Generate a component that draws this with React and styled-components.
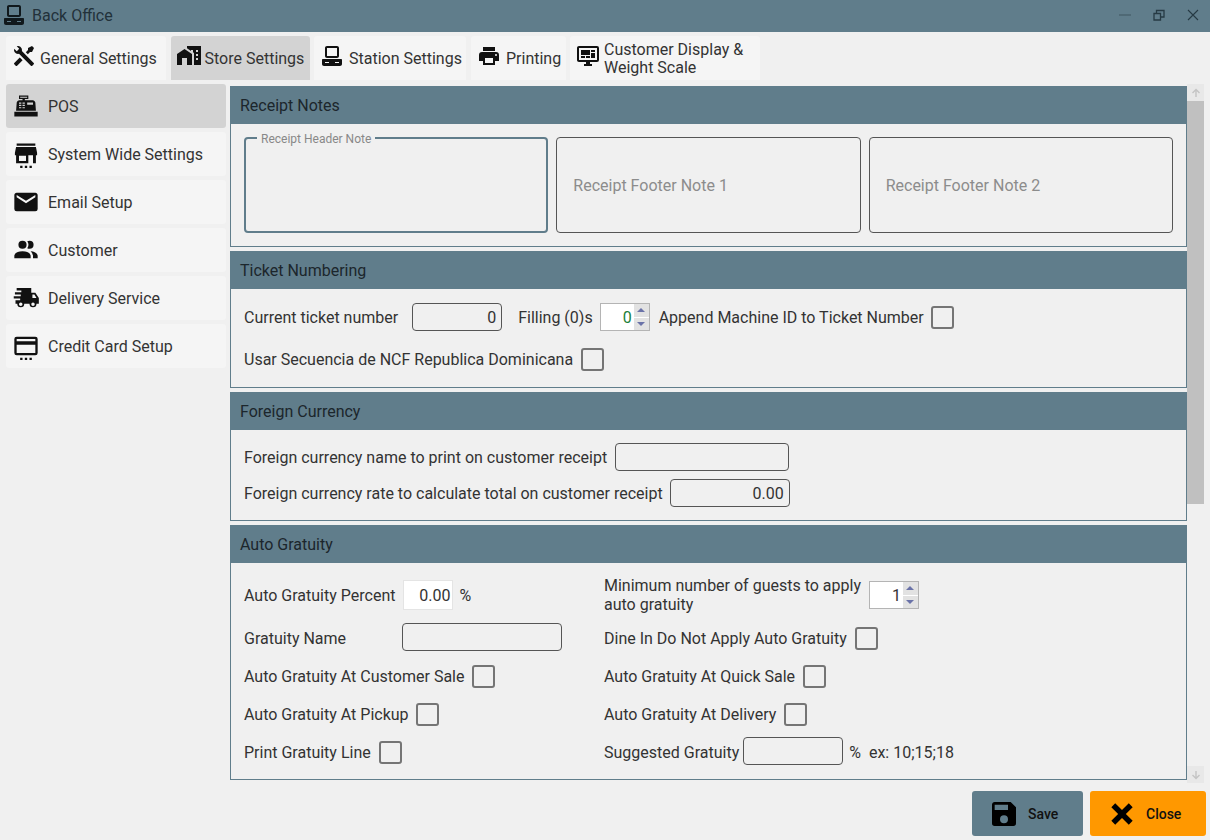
import React from 'react';
import styled, { createGlobalStyle } from 'styled-components';

const GlobalStyle = createGlobalStyle`
html, body {
  margin: 0;
  padding: 0;
  background: #f0f0f0;
}
* {
  box-sizing: border-box;
}
`

const paths = {
  tools: 'M21.71 20.29L20.29 21.71A1 1 0 0 1 18.88 21.71L7 9.85A3.81 3.81 0 0 1 6 10A4 4 0 0 1 2.22 4.7L4.76 7.24L5.29 6.71L6.71 5.29L7.24 4.76L4.7 2.22A4 4 0 0 1 10 6A3.81 3.81 0 0 1 9.85 7L21.71 18.88A1 1 0 0 1 21.71 20.29M2.29 18.88A1 1 0 0 0 2.29 20.29L3.71 21.71A1 1 0 0 0 5.12 21.71L10.59 16.25L7.76 13.42M20 2L16 4V6L13.83 8.17L15.83 10.17L18 8H20L22 4Z',
  homeCity: 'M0,21V10L7.5,5L15,10V21H10V14H5V21H0M24,2V21H17V8.93L16,8.27V6H14V6.93L10,4.27V2H24M21,14H19V16H21V14M21,10H19V12H21V10M21,6H19V8H21V6Z',
  desktop: 'M7,2C5.89,2 5,2.89 5,4V12C5,13.11 5.89,14 7,14H17C18.11,14 19,13.11 19,12V4C19,2.89 18.11,2 17,2H7M7,4H17V12H7V4M3,15C2.45,15 2,15.45 2,16V20C2,21.11 2.89,22 4,22H20C21.11,22 22,21.11 22,20V16C22,15.45 21.55,15 21,15H3M5,18H9V19H5V18M15,18H19V19H15V18Z',
  printer: 'M18,3H6V7H18M19,12A1,1 0 0,1 18,11A1,1 0 0,1 19,10A1,1 0 0,1 20,11A1,1 0 0,1 19,12M16,19H8V14H16M19,8H5A3,3 0 0,0 2,11V17H6V21H18V17H22V11A3,3 0 0,0 19,8Z',
  monitor: 'M21,16V4H3V16H21M21,2A2,2 0 0,1 23,4V16A2,2 0 0,1 21,18H14V20H16V22H8V20H10V18H3C1.89,18 1,17.1 1,16V4C1,2.89 1.89,2 3,2H21M5,6H14V11H5V6M15,6H19V8H15V6M19,9V14H15V9H19M5,12H9V14H5V12M10,12H14V14H10V12Z',
  register: 'M2,17H22V21H2V17M6.25,7H9V6H6V3H14V6H11V7H17.8C18.8,7 19.8,8 20,9L20.5,16H3.5L4.05,9C4.25,8 5.25,7 6.25,7M13,9V11H18V9H13M6,9V10H8V9H6M9,9V10H11V9H9M6,11V12H8V11H6M9,11V12H11V11H9M6,13V14H8V13H6M9,13V14H11V13H9M7,4V5H13V4H7Z',
  store: 'M4 3H20V5H4V3M20.5 6L21.5 11V13H20.5V20H18V13H14V20H3.5V13H2.5V11L3.5 6H20.5M12 13.5H6V18H12V13.5M7 24H9V22H7V24M11 24H13V22H11V24M15 24H17V22H15V24Z',
  email: 'M20,8L12,13L4,8V6L12,11L20,6M20,4H4C2.89,4 2,4.89 2,6V18A2,2 0 0,0 4,20H20A2,2 0 0,0 22,18V6C22,4.89 21.1,4 20,4Z',
  people: 'M16 17V19H2V17S2 13 9 13 16 17 16 17M12.5 7.5A3.5 3.5 0 1 0 9 11A3.5 3.5 0 0 0 12.5 7.5M15.94 13A5.32 5.32 0 0 1 18 17V19H22V17S22 13.37 15.94 13M15 4A3.39 3.39 0 0 0 13.07 4.59A5 5 0 0 1 13.07 10.41A3.39 3.39 0 0 0 15 11A3.5 3.5 0 0 0 15 4Z',
  truck: 'M4 3.5H16.5V7.5H20L23 12V17H21A3 3 0 0 1 15 17H10.5A3 3 0 0 1 4.5 17H3V14H7V12.5H1.5V10.5H7.5V9H2.5V7H8V5.5H4ZM7.5 15.8A1.5 1.5 0 1 0 7.5 18.8A1.5 1.5 0 1 0 7.5 15.8M18 15.8A1.5 1.5 0 1 0 18 18.8A1.5 1.5 0 1 0 18 15.8M17.5 9V12H21L19.2 9Z',
  card: 'M4 4H20A2 2 0 0 1 22 6V18A2 2 0 0 1 20 20H4A2 2 0 0 1 2 18V6A2 2 0 0 1 4 4ZM4 6V8H20V6H4M4 11V18H20V11H4M7 24H9V22H7V24M11 24H13V22H11V24M15 24H17V22H15V24Z',
  save: 'M15,9H5V5H15M12,19A3,3 0 0,1 9,16A3,3 0 0,1 12,13A3,3 0 0,1 15,16A3,3 0 0,1 12,19M17,3H5C3.89,3 3,3.9 3,5V19A2,2 0 0,0 5,21H19A2,2 0 0,0 21,19V7L17,3Z',
  close: 'M20 6.91L17.09 4L12 9.09L6.91 4L4 6.91L9.09 12L4 17.09L6.91 20L12 14.91L17.09 20L20 17.09L14.91 12L20 6.91Z',
}

const Icon = ({ name, size = 24, color = '#111' }) => (
  <svg width={size} height={size} viewBox="0 0 24 24" style={{ flexShrink: 0 }}>
    <path d={paths[name]} fill={color} />
  </svg>
)

const tabs = [
  { icon: 'tools', label: 'General Settings', width: 160, gap: 4 },
  { icon: 'homeCity', label: 'Store Settings', width: 139, gap: 4, active: true },
  { icon: 'desktop', label: 'Station Settings', width: 152, gap: 5 },
  { icon: 'printer', label: 'Printing', width: 95, gap: 5.5 },
  { icon: 'monitor', label: <>Customer Display &<br />Weight Scale</>, width: 190, gap: 4 },
]

const menu = [
  { icon: 'register', label: 'POS', active: true },
  { icon: 'store', label: 'System Wide Settings' },
  { icon: 'email', label: 'Email Setup' },
  { icon: 'people', label: 'Customer' },
  { icon: 'truck', label: 'Delivery Service' },
  { icon: 'card', label: 'Credit Card Setup' },
]

const Spinner = ({ value, green }) => (
  <SpinBox>
    <SpinValue $green={green}>{value}</SpinValue>
    <SpinButtons>
      <SpinButton><Arrow /></SpinButton>
      <SpinButton><Arrow $down /></SpinButton>
    </SpinButtons>
  </SpinBox>
)

const App = () => {
  return (
    <Page>
      <GlobalStyle />
      <TitleBar>
        <Icon name="desktop" size={24} color="#10181c" />
        <TitleText>Back Office</TitleText>
        <WindowButtons>
          <WindowButton $dim>
            <svg width="12" height="12" viewBox="0 0 12 12"><path d="M0 6H12" stroke="#3f5560" strokeWidth="1.4" /></svg>
          </WindowButton>
          <WindowButton>
            <svg width="12" height="12" viewBox="0 0 12 12"><path d="M1 4.5H7.5V11H1ZM3.5 4V1.5H11V8H8" fill="none" stroke="#263a44" strokeWidth="1.3" /></svg>
          </WindowButton>
          <WindowButton>
            <svg width="12" height="12" viewBox="0 0 12 12"><path d="M1 1L11 11M11 1L1 11" stroke="#263a44" strokeWidth="1.1" /></svg>
          </WindowButton>
        </WindowButtons>
      </TitleBar>

      <TabRow>
        {tabs.map((t, i) => (
          <Tab key={i} $active={t.active} $width={t.width} $gap={t.gap}>
            <Icon name={t.icon} />
            <span>{t.label}</span>
          </Tab>
        ))}
      </TabRow>

      <Main>
        <Sidebar>
          {menu.map(m => (
            <MenuItem key={m.label} $active={m.active}>
              <Icon name={m.icon} size={28} />
              <span>{m.label}</span>
            </MenuItem>
          ))}
        </Sidebar>

        <Panels>
          <Panel>
            <PanelHeader>Receipt Notes</PanelHeader>
            <NotesBody>
              <NoteBox $focus>
                <NoteLegend>Receipt Header Note</NoteLegend>
              </NoteBox>
              <NoteBox>Receipt Footer Note 1</NoteBox>
              <NoteBox>Receipt Footer Note 2</NoteBox>
            </NotesBody>
          </Panel>

          <Panel>
            <PanelHeader>Ticket Numbering</PanelHeader>
            <TicketBody>
              <Row>
                <Label>Current ticket number</Label>
                <TextBox $width={90} $left={14}>0</TextBox>
                <Label $left={16}>Filling (0)s</Label>
                <Gap $w={7} />
                <Spinner value="0" green />
                <Label $left={9}>Append Machine ID to Ticket Number</Label>
                <Check $left={7} />
              </Row>
              <Row>
                <Label>Usar Secuencia de NCF Republica Dominicana</Label>
                <Check $left={8} />
              </Row>
            </TicketBody>
          </Panel>

          <Panel>
            <PanelHeader>Foreign Currency</PanelHeader>
            <CurrencyBody>
              <Row>
                <Label>Foreign currency name to print on customer receipt</Label>
                <TextBox $width={174} $left={8} />
              </Row>
              <Row>
                <Label>Foreign currency rate to calculate total on customer receipt</Label>
                <TextBox $width={120} $left={7}>0.00</TextBox>
              </Row>
            </CurrencyBody>
          </Panel>

          <Panel>
            <PanelHeader>Auto Gratuity</PanelHeader>
            <GratuityBody>
              <Row>
                <Label>Auto Gratuity Percent</Label>
                <WhiteBox>0.00</WhiteBox>
                <Label $left={6}>%</Label>
              </Row>
              <Row>
                <Label>Minimum number of guests to apply<br />auto gratuity</Label>
                <Gap $w={8} />
                <Spinner value="1" />
              </Row>
              <Row>
                <Label $width={158}>Gratuity Name</Label>
                <TextBox $width={160} $up />
              </Row>
              <Row>
                <Label>Dine In Do Not Apply Auto Gratuity</Label>
                <Check $left={8} />
              </Row>
              <Row>
                <Label>Auto Gratuity At Customer Sale</Label>
                <Check $left={8} />
              </Row>
              <Row>
                <Label>Auto Gratuity At Quick Sale</Label>
                <Check $left={8} />
              </Row>
              <Row>
                <Label>Auto Gratuity At Pickup</Label>
                <Check $left={7} />
              </Row>
              <Row>
                <Label>Auto Gratuity At Delivery</Label>
                <Check $left={8} />
              </Row>
              <Row>
                <Label>Print Gratuity Line</Label>
                <Check $left={8} />
              </Row>
              <Row>
                <Label>Suggested Gratuity</Label>
                <TextBox $width={100} $left={4} $up />
                <Label $left={6}>%</Label>
                <Label $left={8}>ex: 10;15;18</Label>
              </Row>
            </GratuityBody>
          </Panel>
        </Panels>

        <ScrollBar>
          <ScrollArrow>
            <svg width="10" height="10" viewBox="0 0 10 10"><path d="M5 9V1.5M1.5 5L5 1.5L8.5 5" fill="none" stroke="#c4c4c4" strokeWidth="1.4" /></svg>
          </ScrollArrow>
          <ScrollThumb />
          <ScrollArrow>
            <svg width="10" height="10" viewBox="0 0 10 10"><path d="M5 1V8.5M1.5 5L5 8.5L8.5 5" fill="none" stroke="#c4c4c4" strokeWidth="1.4" /></svg>
          </ScrollArrow>
        </ScrollBar>
      </Main>

      <Footer>
        <ActionButton $color="#607d8b" $width={111}>
          <Icon name="save" size={32} color="#000" />
          <span>Save</span>
        </ActionButton>
        <ActionButton $color="#ff9800" $width={116}>
          <Icon name="close" size={32} color="#000" />
          <span>Close</span>
        </ActionButton>
      </Footer>
    </Page>
  );
};

export default App;

const Page = styled.div`
width: 1210px;
height: 840px;
display: flex;
flex-direction: column;
overflow: hidden;
background: #f0f0f0;
font-family: Roboto, "Liberation Sans", sans-serif;
font-size: 16px;
color: #333;
`

const TitleBar = styled.div`
height: 32px;
background: #607d8b;
display: flex;
align-items: center;
padding: 0 11px 2px 2px;
`

const TitleText = styled.span`
margin-left: 6px;
color: #22313a;
`

const WindowButtons = styled.div`
margin-left: auto;
display: flex;
gap: 22px;
`

const WindowButton = styled.div`
width: 12px;
height: 12px;
display: flex;
opacity: ${p => (p.$dim ? 0.7 : 1)};
`

const TabRow = styled.div`
display: flex;
gap: 4.5px;
padding: 4px 6px 0;
height: 48px;
`

const Tab = styled.div`
width: ${p => p.$width}px;
height: 44px;
display: flex;
align-items: center;
gap: ${p => p.$gap}px;
padding-left: 6px;
line-height: 18px;
border-radius: 3px 3px 0 0;
background: ${p => (p.$active ? '#d3d3d3' : '#f5f5f5')};

& > svg {
  margin-bottom: 4px;
}
& > span {
  margin-top: 2px;
}
`

const Main = styled.div`
display: flex;
height: 699px;
margin-top: 4px;
padding-left: 6px;
`

const Sidebar = styled.div`
width: 220px;
display: flex;
flex-direction: column;
gap: 4px;
`

const MenuItem = styled.div`
height: 44px;
display: flex;
align-items: center;
gap: 8px;
padding-left: 6px;
border-radius: 3px;
background: ${p => (p.$active ? '#d3d3d3' : '#f5f5f5')};
`

const Panels = styled.div`
width: 957px;
margin: 2px 0 0 4px;
display: flex;
flex-direction: column;
gap: 4px;
`

const Panel = styled.section`
border: 1px solid #607d8b;
border-top: none;
`

const PanelHeader = styled.div`
height: 38px;
margin: 0 -1px;
padding-left: 10px;
display: flex;
align-items: center;
background: #607d8b;
color: #1c262c;
`

const NotesBody = styled.div`
display: grid;
grid-template-columns: repeat(3, 1fr);
gap: 8px;
padding: 13px;
`

const NoteBox = styled.div`
position: relative;
height: 96px;
display: flex;
align-items: center;
padding-left: 16px;
border-radius: 4px;
color: #8c8c8c;
border: ${p => (p.$focus ? '2px solid #607d8b' : '1px solid #555')};
`

const NoteLegend = styled.span`
position: absolute;
top: -7px;
left: 11px;
padding: 0 4px;
background: #f0f0f0;
font-size: 12px;
line-height: 14px;
color: #888;
`

const TicketBody = styled.div`
height: 98px;
padding: 14px 13px 0;
display: flex;
flex-direction: column;
gap: 14px;
`

const CurrencyBody = styled.div`
height: 90px;
padding: 13px 13px 0;
display: flex;
flex-direction: column;
gap: 8px;
`

const GratuityBody = styled.div`
padding: 17px 13px 12px;
display: grid;
grid-template-columns: 360px 1fr;
grid-template-rows: 35px 30px 30px 30px 30px;
row-gap: 8px;

& > * {
  height: 30px;
}
`

const Row = styled.div`
display: flex;
align-items: center;
min-height: 28px;
`

const Gap = styled.div`
width: ${p => p.$w}px;
`

const Label = styled.span`
margin-left: ${p => p.$left || 0}px;
width: ${p => (p.$width ? `${p.$width}px` : 'auto')};
line-height: 19px;
white-space: nowrap;
`

const TextBox = styled.div`
width: ${p => p.$width}px;
height: 28px;
margin-left: ${p => p.$left || 0}px;
margin-bottom: ${p => (p.$up ? 2 : 0)}px;
padding-right: 5px;
display: flex;
align-items: center;
justify-content: flex-end;
border: 1px solid #555;
border-radius: 4px;
`

const WhiteBox = styled.div`
width: 50px;
height: 30px;
margin-left: 8px;
padding-right: 2px;
display: flex;
align-items: center;
justify-content: flex-end;
background: #fff;
border: 1px solid #e4e4e4;
`

const Check = styled.div`
width: 23px;
height: 23px;
margin-left: ${p => p.$left || 0}px;
border: 2px solid #757575;
border-radius: 3px;
`

const SpinBox = styled.div`
width: 50px;
height: 28px;
display: flex;
background: #fff;
border: 1px solid #b4b4b4;
`

const SpinValue = styled.div`
flex: 1;
padding-right: 2px;
display: flex;
align-items: center;
justify-content: flex-end;
color: ${p => (p.$green ? '#1b7f3a' : '#333')};
`

const SpinButtons = styled.div`
width: 15px;
display: flex;
flex-direction: column;
gap: 1px;
`

const SpinButton = styled.div`
flex: 1;
display: flex;
align-items: center;
justify-content: center;
background: #e2e2e2;
`

const Arrow = styled.div`
width: 0;
height: 0;
border-left: 4px solid transparent;
border-right: 4px solid transparent;
${p => (p.$down ? 'border-top: 4px solid #6a72a8;' : 'border-bottom: 4px solid #6a72a8;')}
`

const ScrollBar = styled.div`
width: 17px;
height: 699px;
display: flex;
flex-direction: column;
`

const ScrollArrow = styled.div`
height: 17px;
display: flex;
align-items: center;
justify-content: center;
background: #e8e8e8;
`

const ScrollThumb = styled.div`
width: 100%;
height: 403px;
margin-bottom: auto;
background: #c0c0c0;
`

const Footer = styled.div`
display: flex;
justify-content: flex-end;
gap: 7px;
padding: 8px 4px 0;
`

const ActionButton = styled.div`
width: ${p => p.$width}px;
height: 45px;
display: flex;
align-items: center;
gap: 8px;
padding-left: 16px;
border-radius: 3px;
background: ${p => p.$color};
color: #111;
font-size: 14px;
font-weight: 500;
`
